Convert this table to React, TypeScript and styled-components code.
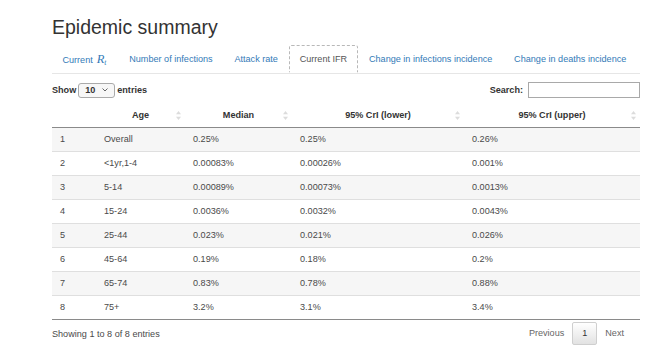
import styled, { createGlobalStyle } from 'styled-components';

const GlobalStyle = createGlobalStyle`
  body {
    margin: 0;
    background: #ffffff;
    font-family: "Liberation Sans", Arial, sans-serif;
    color: #333333;
  }
`;

interface Row {
  age: string;
  median: string;
  lower: string;
  upper: string;
}

const rows: Row[] = [
  { age: 'Overall', median: '0.25%', lower: '0.25%', upper: '0.26%' },
  { age: '<1yr,1-4', median: '0.00083%', lower: '0.00026%', upper: '0.001%' },
  { age: '5-14', median: '0.00089%', lower: '0.00073%', upper: '0.0013%' },
  { age: '15-24', median: '0.0036%', lower: '0.0032%', upper: '0.0043%' },
  { age: '25-44', median: '0.023%', lower: '0.021%', upper: '0.026%' },
  { age: '45-64', median: '0.19%', lower: '0.18%', upper: '0.2%' },
  { age: '65-74', median: '0.83%', lower: '0.78%', upper: '0.88%' },
  { age: '75+', median: '3.2%', lower: '3.1%', upper: '3.4%' },
];

const tabs = [
  'Current Rt',
  'Number of infections',
  'Attack rate',
  'Current IFR',
  'Change in infections incidence',
  'Change in deaths incidence',
];

const Page = styled.div`
  width: 588px;
  padding: 16px 0 0 52px;
  font-size: 9.1px;
  line-height: 13px;
`;

const Title = styled.h2`
  margin: 0 0 6px;
  font-size: 19.5px;
  line-height: 23px;
  font-weight: normal;
  color: #333333;
`;

const TabBar = styled.ul`
  display: flex;
  margin: 0;
  padding: 0;
  list-style: none;
  border-bottom: 1px solid #e6e6e6;
  height: 28px;
`;

const Tab = styled.li<{ $active: boolean }>`
  margin: 0 1px -1px 0;
  padding: 7px 9.4px 7px;
  height: 28px;
  box-sizing: border-box;
  color: ${({ $active }) => ($active ? '#555555' : '#337ab7')};
  background: #ffffff;
  border: 1px dashed ${({ $active }) => ($active ? '#b8b8b8' : 'transparent')};
  border-bottom: 1px solid ${({ $active }) => ($active ? '#ffffff' : 'transparent')};
  border-radius: 2.6px 2.6px 0 0;
  white-space: nowrap;
`;

const MathR = styled.span`
  font-family: "Liberation Serif", "DejaVu Serif", serif;
  font-style: italic;
  font-size: 12.5px;
  margin-left: 4px;
  margin-right: 1px;

  sub {
    font-size: 7.5px;
    vertical-align: -2px;
  }
`;

const Controls = styled.div`
  display: flex;
  justify-content: space-between;
  align-items: center;
  margin-top: 7px;
  height: 18px;
  font-weight: bold;
`;

const LengthLabel = styled.label`
  display: flex;
  align-items: center;
  gap: 2px;
`;

const Select = styled.span`
  display: inline-flex;
  align-items: center;
  justify-content: space-between;
  width: 37px;
  height: 15px;
  padding: 0 6px 0 6px;
  box-sizing: border-box;
  border: 1px solid #aaaaaa;
  border-radius: 3px;
  background: #f7f7f7;
  font-weight: bold;

  svg {
    display: block;
  }
`;

const SearchLabel = styled.label`
  display: flex;
  align-items: center;
  gap: 5px;
`;

const SearchInput = styled.input`
  width: 112px;
  height: 16px;
  box-sizing: border-box;
  border: 1px solid #a9a9a9;
  padding: 0 3px;
  margin: 0;
  font-size: 9px;
`;

const Table = styled.table`
  width: 588px;
  margin-top: 5px;
  border-collapse: collapse;
  table-layout: fixed;
`;

const Col = styled.col<{ $w: number }>`
  width: ${({ $w }) => $w}px;
`;

const HeadCell = styled.th`
  position: relative;
  height: 23px;
  padding: 0 12px;
  font-weight: bold;
  text-align: center;
  white-space: nowrap;
  border-bottom: 1px solid #8a8a8a;
`;

const SortIcon = styled.svg`
  position: absolute;
  right: 4px;
  top: 7px;
`;

const BodyRow = styled.tr<{ $striped: boolean }>`
  height: 24px;
  background: ${({ $striped }) => ($striped ? '#f6f6f6' : '#ffffff')};
  border-top: 1px solid #dfdfdf;

  &:first-child {
    border-top: none;
  }

  &:last-child {
    border-bottom: 1px solid #8a8a8a;
  }
`;

const Cell = styled.td`
  padding: 0 8px;
  color: #4a4a4a;
  white-space: nowrap;
`;

const Footer = styled.div`
  display: flex;
  justify-content: space-between;
  align-items: center;
  margin-top: 2px;
`;

const Info = styled.div`
  color: #4a4a4a;
  padding-top: 1px;
`;

const Pager = styled.div`
  display: flex;
  align-items: center;
  margin-right: 8px;
`;

const PageLink = styled.span`
  padding: 0 8px;
  color: #666666;
`;

const PageButton = styled.span`
  display: inline-flex;
  align-items: center;
  justify-content: center;
  width: 25px;
  height: 23px;
  box-sizing: border-box;
  border: 1px solid #cfcfcf;
  border-radius: 2px;
  background: linear-gradient(#ffffff, #e2e2e2);
  color: #333333;
`;

const Sort = () => (
  <SortIcon width="5" height="9" viewBox="0 0 5 9">
    <path d="M2.5 0 L5 3.2 L0 3.2 Z" fill="#dcdcdc" />
    <path d="M2.5 9 L5 5.8 L0 5.8 Z" fill="#dcdcdc" />
  </SortIcon>
);

const columns = [
  { label: '', w: 44, sort: false },
  { label: 'Age', w: 89, sort: true },
  { label: 'Median', w: 107, sort: true },
  { label: '95% CrI (lower)', w: 172, sort: true },
  { label: '95% CrI (upper)', w: 176, sort: true },
];

export default function App() {
  return (
    <>
      <GlobalStyle />
      <Page>
        <Title>Epidemic summary</Title>
        <TabBar>
          {tabs.map((t) => (
            <Tab key={t} $active={t === 'Current IFR'}>
              {t === 'Current Rt' ? (
                <>
                  Current
                  <MathR>
                    R<sub>t</sub>
                  </MathR>
                </>
              ) : (
                t
              )}
            </Tab>
          ))}
        </TabBar>
        <Controls>
          <LengthLabel>
            Show
            <Select>
              10
              <svg width="6" height="4" viewBox="0 0 6 4">
                <path d="M0.5 0.5 L3 3 L5.5 0.5" stroke="#555" strokeWidth="0.9" fill="none" />
              </svg>
            </Select>
            entries
          </LengthLabel>
          <SearchLabel>
            Search:
            <SearchInput type="search" />
          </SearchLabel>
        </Controls>
        <Table>
          <colgroup>
            {columns.map((c, i) => (
              <Col key={i} $w={c.w} />
            ))}
          </colgroup>
          <thead>
            <tr>
              {columns.map((c, i) => (
                <HeadCell key={i}>
                  {c.label}
                  {c.sort && <Sort />}
                </HeadCell>
              ))}
            </tr>
          </thead>
          <tbody>
            {rows.map((r, i) => (
              <BodyRow key={i} $striped={i % 2 === 0}>
                <Cell>{i + 1}</Cell>
                <Cell>{r.age}</Cell>
                <Cell>{r.median}</Cell>
                <Cell>{r.lower}</Cell>
                <Cell>{r.upper}</Cell>
              </BodyRow>
            ))}
          </tbody>
        </Table>
        <Footer>
          <Info>Showing 1 to 8 of 8 entries</Info>
          <Pager>
            <PageLink>Previous</PageLink>
            <PageButton>1</PageButton>
            <PageLink>Next</PageLink>
          </Pager>
        </Footer>
      </Page>
    </>
  );
}
